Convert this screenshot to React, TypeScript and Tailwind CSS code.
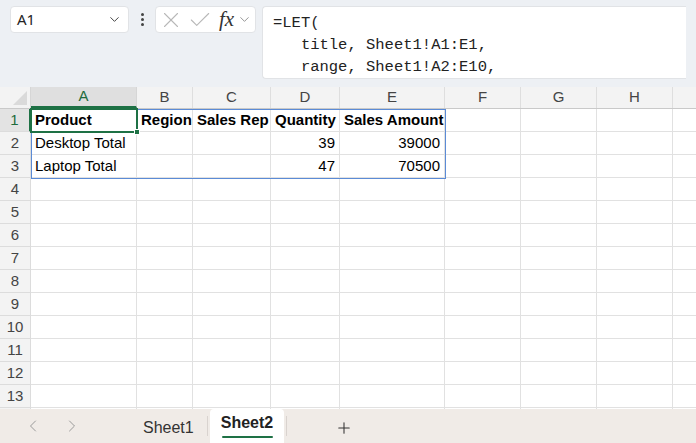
import { ChevronDown, ChevronLeft, ChevronRight, Plus, X, Check } from "lucide-react";

const cols = [
  { k: "A", w: 106 },
  { k: "B", w: 56 },
  { k: "C", w: 78 },
  { k: "D", w: 69 },
  { k: "E", w: 105 },
  { k: "F", w: 76 },
  { k: "G", w: 76 },
  { k: "H", w: 76 },
  { k: "", w: 40 },
];

type Cell = { v: string; bold?: boolean; right?: boolean };

const data: Record<number, Cell[]> = {
  1: [
    { v: "Product", bold: true },
    { v: "Region", bold: true },
    { v: "Sales Rep", bold: true },
    { v: "Quantity", bold: true },
    { v: "Sales Amount", bold: true },
  ],
  2: [{ v: "Desktop Total" }, { v: "" }, { v: "" }, { v: "39", right: true }, { v: "39000", right: true }],
  3: [{ v: "Laptop Total" }, { v: "" }, { v: "" }, { v: "47", right: true }, { v: "70500", right: true }],
};

const rows = Array.from({ length: 14 }, (_, i) => i + 1);

function FormulaBar() {
  return (
    <div className="flex items-start h-[87px] bg-[#edf0f4] px-[10px] pt-[6px] gap-0">
      {/* name box */}
      <div className="flex items-center justify-between w-[119px] h-[27px] bg-white rounded-[4px] border border-[#e1e3e6] pl-[6px] pr-[6px]">
        <span className="text-[15px] text-[#242424]">A1</span>
        <ChevronDown className="w-[15px] h-[15px] text-[#444]" strokeWidth={1.6} />
      </div>
      <div className="flex flex-col items-center justify-center gap-[2px] w-[26px] h-[27px]">
        <span className="w-[3px] h-[3px] rounded-full bg-[#444]" />
        <span className="w-[3px] h-[3px] rounded-full bg-[#444]" />
        <span className="w-[3px] h-[3px] rounded-full bg-[#444]" />
      </div>
      {/* fx box */}
      <div className="flex items-center w-[101px] h-[27px] bg-white rounded-[4px] border border-[#e1e3e6] pl-[2px]">
        <X className="w-[26px] h-[26px] text-[#b8b8b8]" strokeWidth={1} />
        <Check className="w-[26px] h-[26px] text-[#b8b8b8] ml-[3px]" strokeWidth={1} />
        <span className="ml-[6px] text-[21px] italic text-[#333] font-['Liberation_Serif',serif] leading-none">
          fx
        </span>
        <ChevronDown className="w-[15px] h-[15px] text-[#888] ml-[3px]" strokeWidth={1.4} />
      </div>
      {/* formula */}
      <div className="ml-[6px] flex-1 h-[73px] bg-white rounded-l-[4px] border border-r-0 border-[#e1e3e6] pl-[10px] pt-[5px] font-['Liberation_Mono',monospace] text-[15.5px] leading-[22px] text-[#222] whitespace-pre">
        <div>=LET(</div>
        <div>   title, Sheet1!A1:E1,</div>
        <div>   range, Sheet1!A2:E10,</div>
      </div>
    </div>
  );
}

function Grid() {
  return (
    <div className="relative bg-white font-['Liberation_Sans',Arial,sans-serif] overflow-hidden h-[322px]">
      {/* header row */}
      <div className="flex h-[22px] bg-[#f3f3f3] border-b border-[#c9c9c9]">
        <div className="relative w-[31px] shrink-0 border-r border-[#d6d6d6]">
          <div className="absolute right-[3px] bottom-[3px] w-0 h-0 border-l-[14px] border-l-transparent border-b-[14px] border-b-[#dadada]" />
        </div>
        {cols.map((c, i) => (
          <div
            key={i}
            style={{ width: c.w }}
            className={
              c.k === "A"
                ? "shrink-0 flex items-center justify-center text-[15px] text-[#1e6b3c] bg-[#dfdfdf] border-r border-[#d6d6d6] border-b-2 border-b-[#1e7145]"
                : "shrink-0 flex items-center justify-center text-[15px] text-[#444] border-r border-[#dedede]"
            }
          >
            {c.k}
          </div>
        ))}
      </div>
      {rows.map((r) => (
        <div key={r} className="flex h-[23px]">
          <div
            className={
              r === 1
                ? "w-[31px] shrink-0 flex items-center justify-center text-[15px] text-[#1e6b3c] bg-[#e3e3e3] border-r-2 border-r-[#1e7145] border-b border-[#dcdcdc]"
                : "w-[31px] shrink-0 flex items-center justify-center text-[15px] text-[#444] bg-[#f3f3f3] border-r border-[#c9c9c9] border-b border-[#dcdcdc]"
            }
          >
            {r < 14 ? r : ""}
          </div>
          {cols.map((c, ci) => {
            const cell = data[r]?.[ci];
            return (
              <div
                key={ci}
                style={{ width: c.w }}
                className={
                  "shrink-0 flex items-center px-[4px] text-[15px] text-black border-r border-b border-[#e1e1e1] whitespace-nowrap " +
                  (cell?.right ? "justify-end " : "") +
                  (cell?.bold ? "font-bold" : "")
                }
              >
                {cell?.v}
              </div>
            );
          })}
        </div>
      ))}
      {/* table range outline */}
      <div className="absolute left-[31px] top-[22px] w-[415px] h-[70px] border border-[#5b8bd6] pointer-events-none" />
      {/* active cell */}
      <div className="absolute left-[30px] top-[21px] w-[108px] h-[25px] border-2 border-[#1e7145] pointer-events-none" />
      <div className="absolute left-[134px] top-[42px] w-[6px] h-[6px] bg-[#1e7145] border border-white pointer-events-none" />
    </div>
  );
}

function TabBar() {
  return (
    <div className="flex items-stretch h-[34px] bg-[#f0ebe7] font-['Liberation_Sans',Arial,sans-serif]">
      <div className="flex items-center pl-[23px] gap-[19px] w-[135px]">
        <ChevronLeft className="w-[20px] h-[20px] text-[#9a9a9a]" strokeWidth={1.2} />
        <ChevronRight className="w-[20px] h-[20px] text-[#9a9a9a]" strokeWidth={1.2} />
      </div>
      <div className="flex items-center w-[72px] justify-start pl-[8px] text-[16px] text-[#333] pt-[4px]">Sheet1</div>
      <div className="w-px bg-[#d9d3cf] my-[7px]" />
      <div className="flex flex-col items-center justify-end pb-[5px] w-[74px] bg-white rounded-t-[4px] mx-[2px]">
        <span className="text-[16px] text-[#222] font-semibold leading-[20px]">Sheet2</span>
        <span className="w-[51px] h-[2px] bg-[#1e7145] rounded-full mt-[3px]" />
      </div>
      <div className="w-px bg-[#d9d3cf] my-[7px]" />
      <div className="flex items-center pl-[48px] pt-[4px]">
        <Plus className="w-[18px] h-[18px] text-[#333]" strokeWidth={1.4} />
      </div>
    </div>
  );
}

export default function App() {
  return (
    <div className="w-[696px] h-[443px] overflow-hidden flex flex-col bg-white">
      <FormulaBar />
      <Grid />
      <TabBar />
    </div>
  );
}
